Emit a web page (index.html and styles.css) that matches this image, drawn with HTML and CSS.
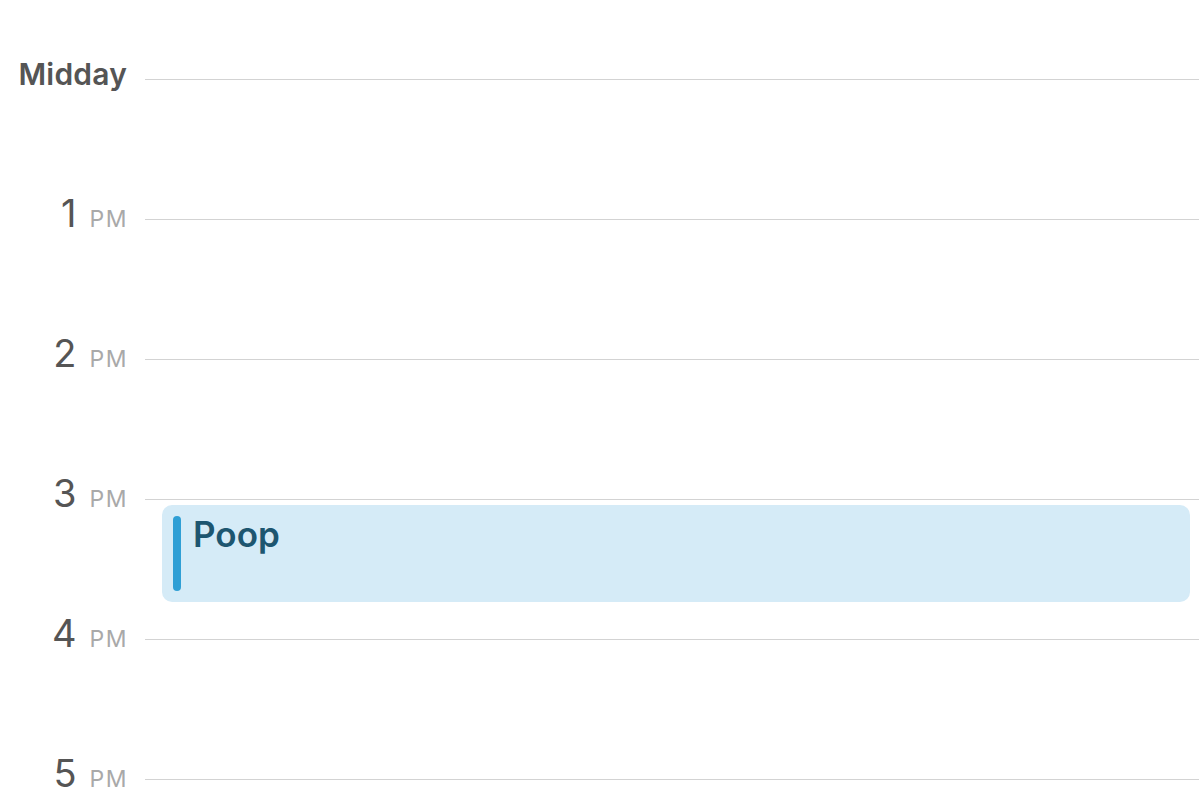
FILE: index.html
```html
<!DOCTYPE html>
<html>
<head>
<meta charset="utf-8">
<link rel="stylesheet" href="styles.css">
</head>
<body>
<div class="day">
  <div class="row">
    <div class="label"><span class="word">Midday</span></div>
    <div class="track"><div class="line"></div></div>
  </div>
  <div class="row">
    <div class="label"><span class="num">1</span><span class="ampm">PM</span></div>
    <div class="track"><div class="line"></div></div>
  </div>
  <div class="row">
    <div class="label"><span class="num">2</span><span class="ampm">PM</span></div>
    <div class="track"><div class="line"></div></div>
  </div>
  <div class="row">
    <div class="label"><span class="num">3</span><span class="ampm">PM</span></div>
    <div class="track">
      <div class="line"></div>
      <div class="event">
        <div class="event-bar"></div>
        <div class="event-title">Poop</div>
      </div>
    </div>
  </div>
  <div class="row">
    <div class="label"><span class="num">4</span><span class="ampm">PM</span></div>
    <div class="track"><div class="line"></div></div>
  </div>
  <div class="row last">
    <div class="label"><span class="num">5</span><span class="ampm">PM</span></div>
    <div class="track"><div class="line"></div></div>
  </div>
</div>
</body>
</html>
```

FILE: styles.css
```css
html, body {
  margin: 0;
  padding: 0;
  background: #ffffff;
  overflow: hidden;
}
body {
  font-family: Inter, "Open Sans", sans-serif;
  width: 1199px;
  height: 788px;
}
.day {
  padding-top: 59px;
}
.row {
  display: grid;
  grid-template-columns: 127px 1fr;
  column-gap: 18px;
  height: 140px;
}
.row.last {
  height: 29px;
}
.label {
  text-align: right;
  white-space: nowrap;
  height: 40px;
  line-height: 40px;
  margin-top: -6px;
}
.word {
  font-size: 30px;
  font-weight: 600;
  color: #555555;
  letter-spacing: 0.2px;
  position: relative;
  top: 1px;
}
.num {
  font-size: 38px;
  font-weight: 400;
  color: #555555;
}
.ampm {
  font-size: 23px;
  color: #a9a9a9;
  margin-left: 13px;
  letter-spacing: 1.5px;
  margin-right: -1px;
}
.track {
  display: flex;
  flex-direction: column;
}
.line {
  margin-top: 20px;
  height: 1px;
  background: #d3d3d3;
}
.event {
  margin: 5px 9px 0 17px;
  height: 97px;
  background: #d5ebf7;
  border-radius: 10px;
  display: flex;
  align-items: flex-start;
  padding: 11px 0 0 11px;
  box-sizing: border-box;
}
.event-bar {
  width: 8px;
  height: 75px;
  border-radius: 4px;
  background: #2f9fd5;
}
.event-title {
  margin-left: 12px;
  font-size: 35px;
  font-weight: 600;
  color: #1d5670;
  line-height: 40px;
  margin-top: -2px;
}
```
